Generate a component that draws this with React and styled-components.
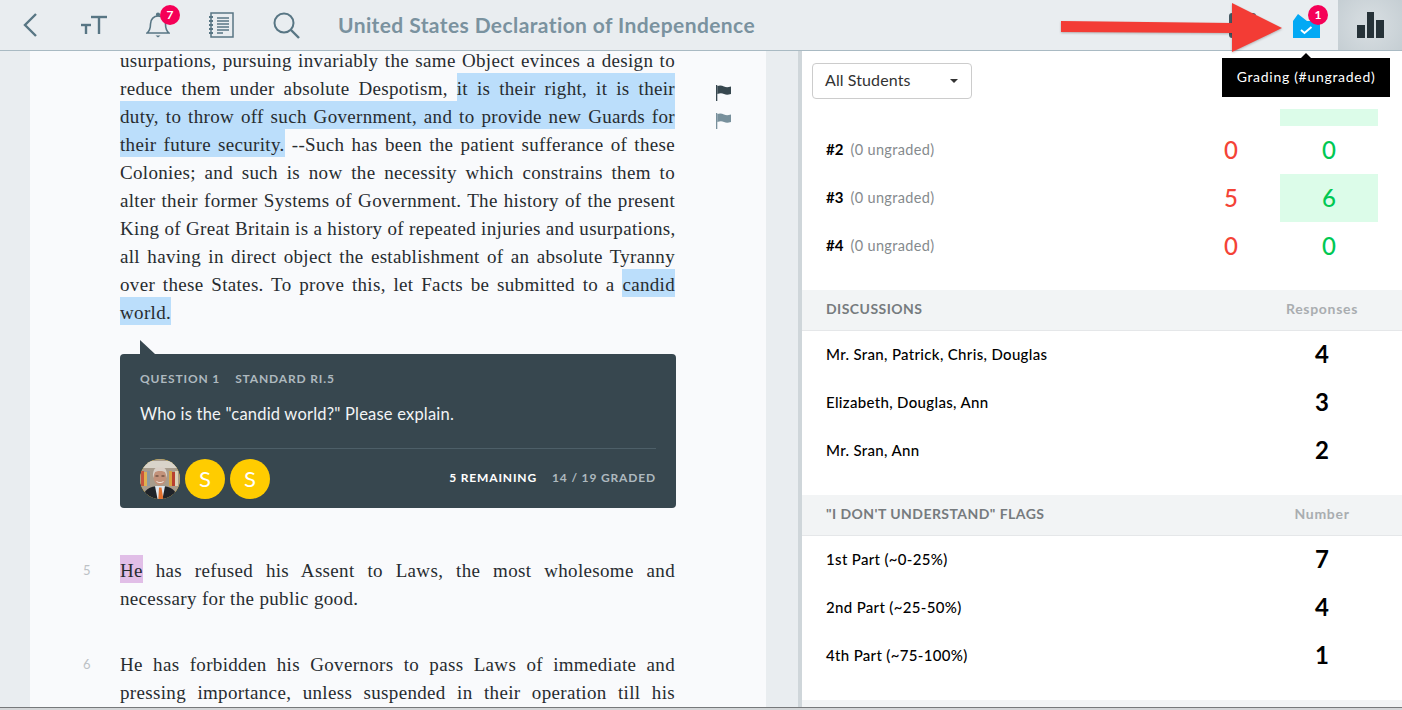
import React from "react";
import styled, { createGlobalStyle } from "styled-components";

const Global = createGlobalStyle`
  html, body { margin: 0; padding: 0; height: 100%; overflow: hidden; background: #fff; }
  #root { height: 100%; }
  * { box-sizing: border-box; }
`;
const SANS = `Lato, "Open Sans", "Liberation Sans", sans-serif`;
const SERIF = `"Liberation Serif", "DejaVu Serif", serif`;

const Shell = styled.div`
  position: relative; display: flex; flex-direction: column; width: 1402px; height: 710px;
  overflow: hidden; font-family: ${SANS};
`;
const Header = styled.header`
  flex: 0 0 51px; display: flex; align-items: stretch; background: #e9edf0;
  border-bottom: 1px solid #a9bac3;
`;
const Nav = styled.nav`display: flex; margin-left: -2px;`;
const IconSlot = styled.div`
  position: relative; flex: 0 0 64px; display: flex; align-items: center; justify-content: center;
  color: #587684; background: ${p => (p.$active ? "radial-gradient(circle, #d3dade 30%, #c5ced3 100%)" : "transparent")};
`;
const Title = styled.h1`
  margin: 0 0 0 20px; align-self: center; font-size: 21px; line-height: 50px; font-weight: 700;
  color: #7a929f; white-space: nowrap; letter-spacing: 0.4px;
`;
const HeaderRight = styled.div`margin-left: auto; display: flex;`;
const Badge = styled.span`
  position: absolute; top: 5px; left: ${p => p.$left}px; width: 20px; height: 20px; border-radius: 50%;
  background: #f50057; color: #fff; font-size: 12px; font-weight: 700; line-height: 20px; text-align: center;
`;
const Tooltip = styled.div`
  position: absolute; top: 58px; left: -52px; width: 168px; height: 39px; z-index: 3; background: #000;
  color: #fff; font-size: 14px; line-height: 38px; text-align: center; white-space: nowrap; letter-spacing: 0.7px;
  &::before {
    content: ""; position: absolute; top: -5px; left: 79px; border: 5px solid transparent;
    border-top: 0; border-bottom-color: #000;
  }
`;
const RedArrow = styled.svg`
  position: absolute; left: 1058px; top: 0; z-index: 4; filter: drop-shadow(0 1px 1px rgba(0,0,0,.25));
`;
const Body = styled.div`flex: 1; min-height: 0; display: flex; background: #e9edf0;`;
const LeftCol = styled.main`flex: 0 0 798px; padding: 0 32px 0 30px; overflow: hidden;`;
const Page = styled.article`width: 736px; height: 100%; background: #f9fafc; overflow: hidden;`;
const Para = styled.section`
  display: grid; grid-template-columns: 90px 556px 1fr; margin-top: ${p => p.$top}px;
`;
const Num = styled.span`
  padding: 6px 0 0 53px; font-size: 13px; line-height: 14px; color: #bcc1c5;
`;
const Text = styled.div`
  font-family: ${SERIF}; font-size: 19px; line-height: 28px; color: #272c30;
`;
const Line = styled.div`
  white-space: nowrap; width: 555px; text-align: justify; letter-spacing: 0.33px;
  text-align-last: ${p => (p.$last ? "left" : "justify")};
`;
const Mark = styled.span`
  background: ${p => (p.$purple ? "#e1bee7" : "#bbdefb")}; padding: 4.6px 0 1.6px;
`;
const Flags = styled.div`
  display: flex; flex-direction: column; gap: 12px; padding: 38px 0 0 40px;
`;
const Card = styled.div`
  position: relative; margin: 27px 0 0 90px; width: 556px; height: 154px; padding: 16px 20px 0;
  background: #37474f; border-radius: 4px; color: #fff;
  &::before {
    content: ""; position: absolute; left: 20px; top: -14px; border-style: solid;
    border-width: 14px 0 0 15px; border-color: transparent transparent transparent #37474f;
  }
`;
const CardTop = styled.div`
  display: flex; gap: 15px; font-size: 12px; line-height: 18px; font-weight: 700;
  letter-spacing: 0.85px; color: #aeb9bf;
`;
const Question = styled.p`margin: 16px 0 0; font-size: 16.5px; line-height: 20px; letter-spacing: 0.2px; color: #f2f4f5;`;
const CardBottom = styled.div`
  margin-top: 24px; padding-top: 10px; border-top: 1px solid #4d5f68;
  display: flex; align-items: center; justify-content: space-between;
`;
const Avatars = styled.div`display: flex; gap: 5px;`;
const Avatar = styled.div`
  width: 40px; height: 40px; border-radius: 50%; background: #ffcc00; color: #fff; overflow: hidden;
  font-size: 22px; line-height: 40px; text-align: center;
`;
const Tally = styled.div`
  display: flex; gap: 15px; padding-bottom: 4px; font-size: 12px; font-weight: 700;
  letter-spacing: 0.85px; color: #aeb9bf;
`;
const TallyStrong = styled.span`color: #fff;`;

const Divider = styled.div`flex: 0 0 4px; background: #cfd6da;`;
const RightCol = styled.aside`flex: 1; min-width: 0; display: flex; flex-direction: column; background: #fff;`;
const Toolbar = styled.div`flex: 0 0 58px; padding: 12px 0 0 10px; background: #fff;`;
const Select = styled.div`
  width: 160px; height: 36px; padding: 0 12px 4px; display: flex; align-items: center; justify-content: space-between;
  border: 1px solid #ccc; border-radius: 4px; font-size: 16px; letter-spacing: 0.1px; color: #333;
  &::after {
    content: ""; border-style: solid; border-width: 4px 4px 0; margin: 3px 1px 0 0;
    border-color: #333 transparent transparent;
  }
`;
const Scroller = styled.div`flex: 1; min-height: 0; overflow: hidden;`;
const Rows = styled.div`margin-top: ${p => p.$top || 0}px; padding-bottom: 20px;`;
const Row = styled.div`
  height: 48px; display: flex; align-items: center; padding-left: 24px; color: #000;
  ${p => p.$raised && "& > span { padding-bottom: 5px; }"}
`;
const Label = styled.span`flex: 1; padding-bottom: 2px; font-size: 15px; font-weight: 500; letter-spacing: 0.33px;`;
const Hash = styled.b`font-size: 15px; font-weight: 700; letter-spacing: 0;`;
const Ungraded = styled.span`margin-left: 7px; font-size: 14.5px; font-weight: 400; color: #858a8d; letter-spacing: 0.35px;`;
const Score = styled.span`
  flex: 0 0 98px; align-self: stretch; display: flex; align-items: center; justify-content: center;
  padding-bottom: 2px; font-size: 24px; font-weight: 500; color: ${p => p.$color};
  background: ${p => (p.$fill ? "#dcfce9" : "transparent")};
`;
const Spacer = styled.span`flex: 0 0 24px;`;
const Count = styled.span`
  flex: 0 0 98px; margin-right: 31px; padding-bottom: 3px; text-align: center; font-size: 24px; font-weight: 700; color: #000;
`;
const SectionHead = styled.div`
  height: 41px; display: flex; align-items: center; padding: 0 0 3px 24px; background: #f2f4f5;
  border-bottom: 1px solid #e5e7e9; font-weight: 700;
`;
const SectionTitle = styled.span`flex: 1; font-size: 14px; letter-spacing: 0.45px; color: #767b7e;`;
const SectionCol = styled.span`
  flex: 0 0 98px; margin-right: 31px; text-align: center; font-size: 14px; letter-spacing: 0.7px; color: #a9adb0;
`;
const Chrome = styled.div`flex: 0 0 3px; background: #d4d6d8; border-top: 1px solid #77797b;`;

const Back = () => (
  <svg width="16" height="26" viewBox="0 0 16 26" fill="none" stroke="currentColor" strokeWidth="2.4">
    <polyline points="14,2 3,13 14,24" />
  </svg>
);
const TextSize = () => (
  <svg width="26" height="20" viewBox="0 0 26 20" fill="none" stroke="currentColor" strokeWidth="2.4">
    <line x1="0" y1="10" x2="10" y2="10" /><line x1="5" y1="10" x2="5" y2="19" />
    <line x1="10" y1="2" x2="26" y2="2" /><line x1="18" y1="2" x2="18" y2="19" />
  </svg>
);
const Bell = () => (
  <svg width="24" height="26" viewBox="0 0 24 26" fill="none" stroke="currentColor" strokeWidth="1.6">
    <path d="M1 21c2.500-2 3.500-4 3.500-9C4.500 7 8 4 12 4s7.500 3 7.500 8c0 5 1 7 3.500 9z" />
    <circle cx="12" cy="2.500" r="1.300" fill="currentColor" />
    <path d="M9.500 23.500h5l-2.500 2z" fill="currentColor" stroke="none" />
  </svg>
);
const Notebook = () => (
  <svg width="27" height="26" viewBox="0 0 27 26" fill="none" stroke="currentColor" strokeWidth="1.500" style={{ marginLeft: -1 }}>
    <rect x="3" y="1" width="22" height="24" />
    <path d="M1 5h4M1 9h4M1 13h4M1 17h4M1 21h4" strokeWidth="2" />
    <path d="M9 6h12M9 9h12M9 12h12M9 15h12M9 18h12M9 21h6" strokeWidth="1.300" />
  </svg>
);
const Search = () => (
  <svg width="27" height="27" viewBox="0 0 27 27" fill="none" stroke="currentColor" strokeWidth="2">
    <circle cx="11" cy="11" r="9.500" /><line x1="18" y1="18" x2="26" y2="26" strokeWidth="2.400" />
  </svg>
);
const Hidden = () => (
  <svg width="27" height="25" viewBox="0 0 27 25"><rect width="27" height="25" rx="3" fill="#455a64" /></svg>
);
const Grading = () => (
  <svg width="27" height="24" viewBox="0 0 27 24" style={{ marginTop: 1 }}>
    <path d="M0 7 5 0 14 7H27V24H0z" fill="#03a9f4" />
    <polyline points="8,16 11.500,19 18.500,13" fill="none" stroke="#fff" strokeWidth="2" />
  </svg>
);
const Chart = () => (
  <svg width="27" height="26" viewBox="0 0 27 26" fill="#263238">
    <rect x="0" y="13" width="8" height="13" /><rect x="10" y="0" width="7" height="26" /><rect x="19" y="8" width="8" height="18" />
  </svg>
);
const Flag = ({ color }) => (
  <svg width="15" height="16" viewBox="0 0 15 16" fill={color}>
    <rect x="0" y="0" width="1.300" height="16" />
    <path d="M1.300 1C4 0 6 .5 8 1.500s4 1 7 0V9c-3 1-5 1-7 0S4 8 1.300 9z" />
  </svg>
);
const Photo = () => (
  <svg width="40" height="40" viewBox="0 0 40 40">
    <rect width="40" height="40" fill="#a89c8c" />
    <rect x="0" y="2" width="40" height="7" fill="#d9d4ca" />
    <rect x="1" y="12" width="3" height="15" fill="#c8553d" /><rect x="4" y="13" width="3" height="14" fill="#e0b050" />
    <rect x="7" y="12" width="3" height="15" fill="#8f9aa0" />
    <rect x="29" y="12" width="3" height="15" fill="#d9a441" /><rect x="32" y="13" width="3" height="14" fill="#b8402f" />
    <rect x="35" y="12" width="3" height="15" fill="#dcd2b8" />
    <path d="M3 40c0-9 6-13 17-13s17 4 17 13z" fill="#1f2329" />
    <path d="M15 27h10l-2.500 13h-5z" fill="#dfe6ee" />
    <path d="M19 28.500h2.500l1.800 11.500h-5z" fill="#e2702c" />
    <ellipse cx="20" cy="18" rx="6.500" ry="8.500" fill="#c3927a" />
    <path d="M13.200 19c-.8-5 .5-9 3-10.500 1-.5 6.600-.5 7.600 0 2.500 1.500 3.800 5.500 3 10.500-.8-3-1.200-5-2-6-1.500-1.500-8-1.500-9.600 0-.8 1-1.200 3-2 6z" fill="#d9cfc6" />
    <path d="M15.500 17h3M21.500 17h3" stroke="#4a342a" strokeWidth="1" />
    <path d="M16.500 22.500c2 1.500 5 1.500 7 0" stroke="#f2e8e0" strokeWidth="1" fill="none" />
  </svg>
);

const App = () => (
  <Shell>
    <Global />
    <Header>
      <Nav>
        <IconSlot><Back /></IconSlot>
        <IconSlot><TextSize /></IconSlot>
        <IconSlot><Bell /><Badge $left={34}>7</Badge></IconSlot>
        <IconSlot><Notebook /></IconSlot>
        <IconSlot><Search /></IconSlot>
      </Nav>
      <Title>United States Declaration of Independence</Title>
      <HeaderRight>
        <IconSlot><Hidden /></IconSlot>
        <IconSlot>
          <Grading /><Badge $left={34}>1</Badge>
          <Tooltip>Grading (#ungraded)</Tooltip>
        </IconSlot>
        <IconSlot $active><Chart /></IconSlot>
      </HeaderRight>
    </Header>
    <RedArrow width="230" height="56" viewBox="0 0 230 56">
      <path d="M3 21 174 23 174 3 224 28 174 52 174 33 3 32z" fill="#f33c35" />
    </RedArrow>
    <Body>
      <LeftCol>
        <Page>
          <Para $top={-4}>
            <span />
            <Text>
              <Line>usurpations, pursuing invariably the same Object evinces a design to</Line>
              <Line>reduce them under absolute Despotism, <Mark>it is their right, it is their</Mark></Line>
              <Line><Mark>duty, to throw off such Government, and to provide new Guards for</Mark></Line>
              <Line><Mark>their future security.</Mark> --Such has been the patient sufferance of these</Line>
              <Line>Colonies; and such is now the necessity which constrains them to</Line>
              <Line>alter their former Systems of Government. The history of the present</Line>
              <Line>King of Great Britain is a history of repeated injuries and usurpations,</Line>
              <Line>all having in direct object the establishment of an absolute Tyranny</Line>
              <Line>over these States. To prove this, let Facts be submitted to a <Mark>candid</Mark></Line>
              <Line $last><Mark>world.</Mark></Line>
            </Text>
            <Flags><Flag color="#37474f" /><Flag color="#78909c" /></Flags>
          </Para>
          <Card>
            <CardTop><span>QUESTION 1</span><span>STANDARD RI.5</span></CardTop>
            <Question>Who is the "candid world?" Please explain.</Question>
            <CardBottom>
              <Avatars>
                <Avatar><Photo /></Avatar>
                <Avatar>S</Avatar>
                <Avatar>S</Avatar>
              </Avatars>
              <Tally><TallyStrong>5 REMAINING</TallyStrong><span>14 / 19 GRADED</span></Tally>
            </CardBottom>
          </Card>
          <Para $top={49}>
            <Num>5</Num>
            <Text>
              <Line><Mark $purple>He</Mark> has refused his Assent to Laws, the most wholesome and</Line>
              <Line $last>necessary for the public good.</Line>
            </Text>
          </Para>
          <Para $top={38}>
            <Num>6</Num>
            <Text>
              <Line>He has forbidden his Governors to pass Laws of immediate and</Line>
              <Line>pressing importance, unless suspended in their operation till his</Line>
            </Text>
          </Para>
        </Page>
      </LeftCol>
      <Divider />
      <RightCol>
        <Toolbar><Select>All Students</Select></Toolbar>
        <Scroller>
          <Rows $top={-31}>
            <Row $raised><Label><Hash>#1</Hash><Ungraded>(0 ungraded)</Ungraded></Label><Score $color="#f44336">1</Score><Score $fill $color="transparent">4</Score><Spacer /></Row>
            <Row><Label><Hash>#2</Hash><Ungraded>(0 ungraded)</Ungraded></Label><Score $color="#f44336">0</Score><Score $color="#00c853">0</Score><Spacer /></Row>
            <Row><Label><Hash>#3</Hash><Ungraded>(0 ungraded)</Ungraded></Label><Score $color="#f44336">5</Score><Score $fill $color="#00c853">6</Score><Spacer /></Row>
            <Row><Label><Hash>#4</Hash><Ungraded>(0 ungraded)</Ungraded></Label><Score $color="#f44336">0</Score><Score $color="#00c853">0</Score><Spacer /></Row>
          </Rows>
          <SectionHead><SectionTitle>DISCUSSIONS</SectionTitle><SectionCol>Responses</SectionCol></SectionHead>
          <Rows>
            <Row><Label>Mr. Sran, Patrick, Chris, Douglas</Label><Count>4</Count></Row>
            <Row><Label>Elizabeth, Douglas, Ann</Label><Count>3</Count></Row>
            <Row><Label>Mr. Sran, Ann</Label><Count>2</Count></Row>
          </Rows>
          <SectionHead><SectionTitle>"I DON'T UNDERSTAND" FLAGS</SectionTitle><SectionCol>Number</SectionCol></SectionHead>
          <Rows>
            <Row><Label>1st Part (~0-25%)</Label><Count>7</Count></Row>
            <Row><Label>2nd Part (~25-50%)</Label><Count>4</Count></Row>
            <Row><Label>4th Part (~75-100%)</Label><Count>1</Count></Row>
          </Rows>
          <SectionHead />
        </Scroller>
      </RightCol>
    </Body>
    <Chrome />
  </Shell>
);

export default App;
